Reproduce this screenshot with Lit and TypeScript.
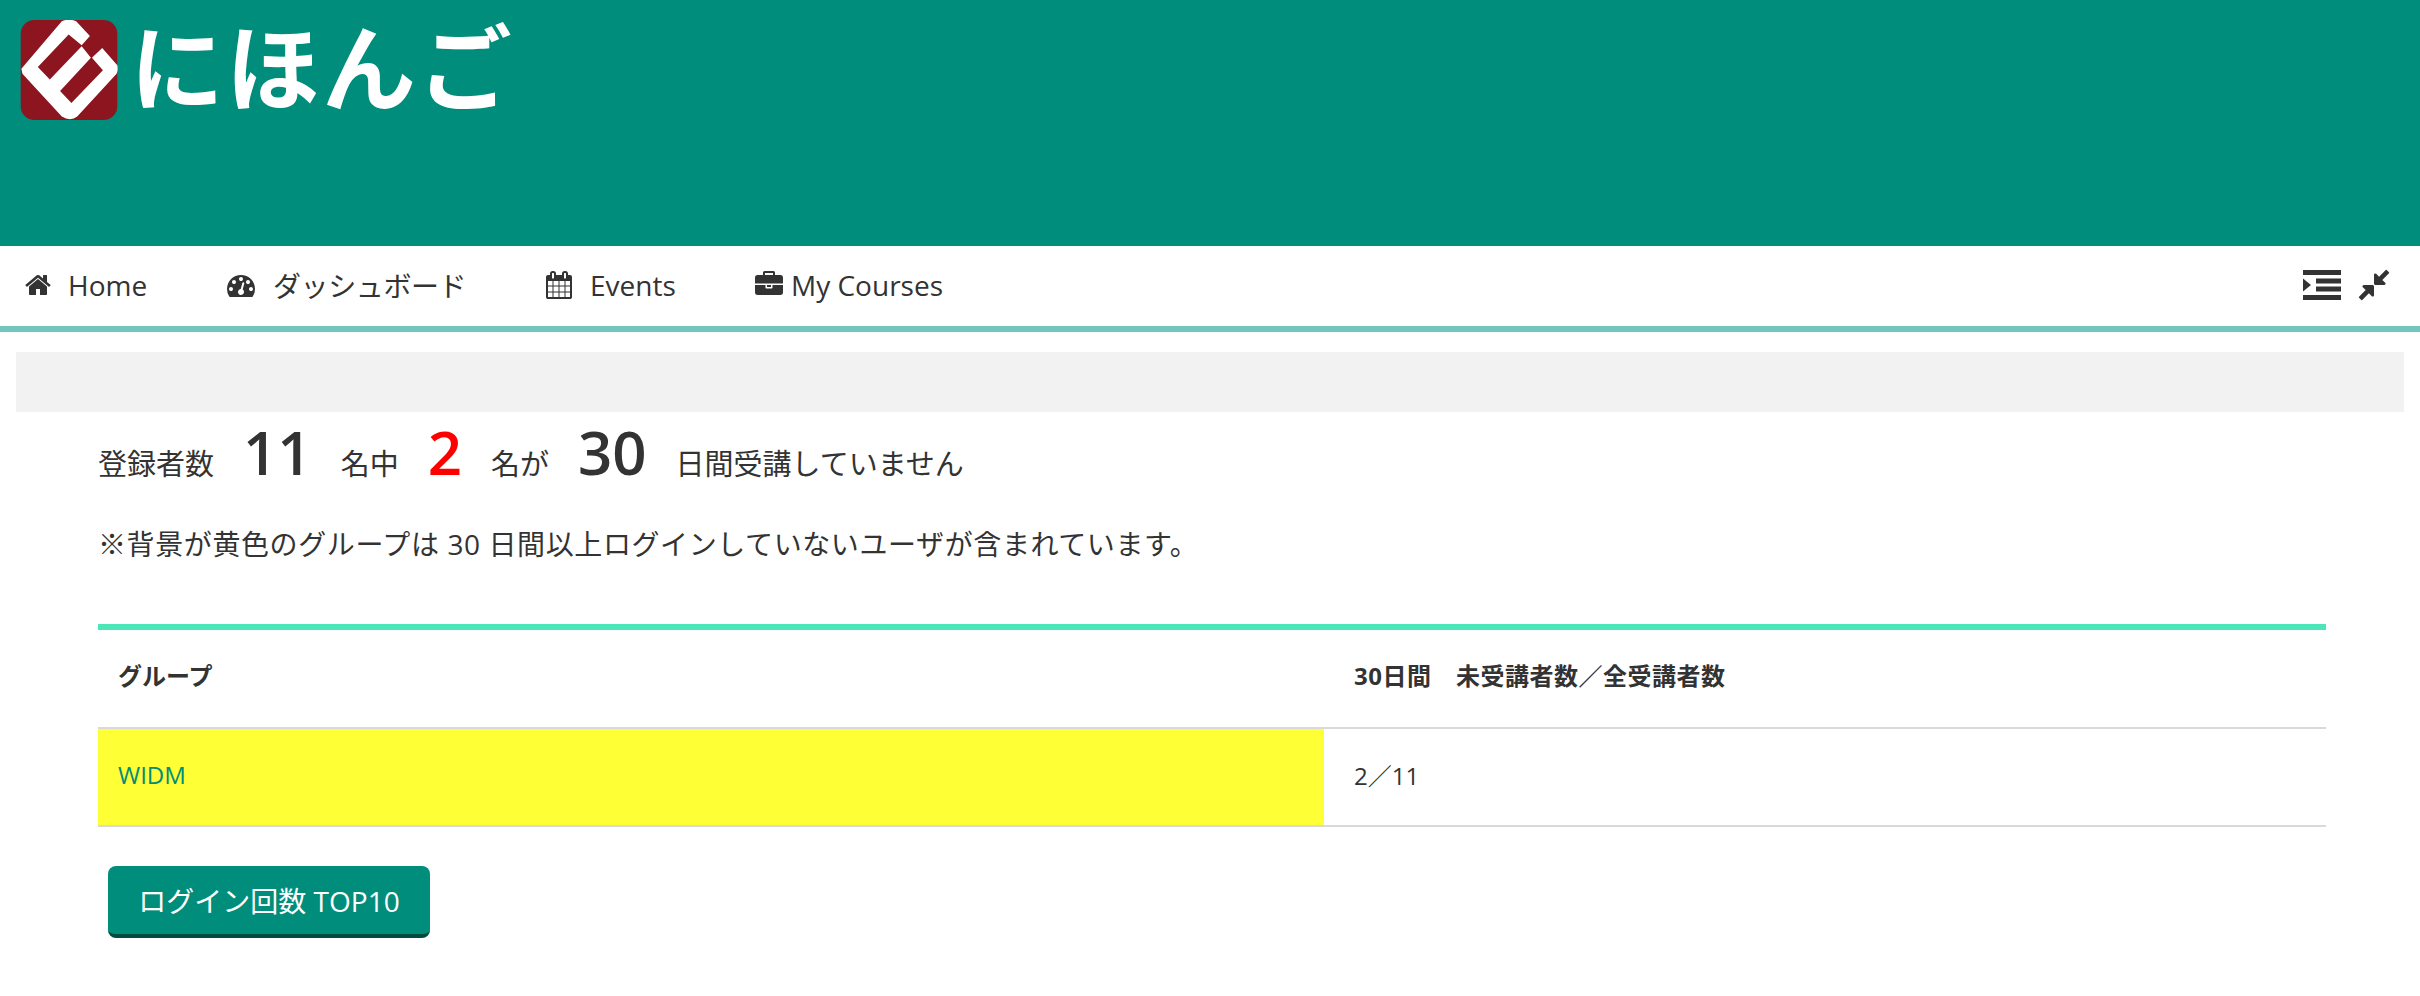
import { LitElement, html, css, svg } from 'lit';
import { customElement } from 'lit/decorators.js';

const icons = {
  home: 'M1472 992v480q0 26-19 45t-45 19h-384v-384h-256v384h-384q-26 0-45-19t-19-45v-480q0-1 .5-3t.5-3l575-474 575 474q1 2 1 6zm223-69l-62 74q-8 9-21 11h-3q-13 0-21-7l-692-577-692 577q-12 8-24 7-13-2-21-11l-62-74q-8-10-7-23.500t11-21.500l719-599q32-26 76-26t76 26l244 204v-195q0-14 9-23t23-9h192q14 0 23 9t9 23v408l219 182q10 8 11 21.500t-7 23.500z',
  gauge: 'M384 1152q0-53-37.500-90.500t-90.500-37.500-90.500 37.500-37.500 90.500 37.500 90.500 90.500 37.500 90.500-37.500 37.500-90.500zm192-448q0-53-37.500-90.500t-90.500-37.500-90.500 37.500-37.500 90.500 37.500 90.500 90.500 37.500 90.500-37.500 37.500-90.500zm428 481l101-382q6-26-7.500-48.500t-38.500-29.500-48 6.500-30 39.500l-101 382q-60 5-107 43.500t-63 98.500q-20 77 20 146t117 89 146-20 89-117q16-60-6-117t-72-91zm660-33q0-53-37.500-90.500t-90.500-37.500-90.500 37.500-37.500 90.500 37.500 90.500 90.500 37.500 90.500-37.500 37.500-90.500zm-640-640q0-53-37.500-90.500t-90.500-37.500-90.500 37.500-37.500 90.500 37.500 90.500 90.500 37.500 90.500-37.500 37.500-90.500zm448 192q0-53-37.500-90.500t-90.500-37.500-90.500 37.500-37.500 90.500 37.500 90.500 90.500 37.500 90.500-37.500 37.500-90.500zm320 448q0 261-141 483-19 29-54 29h-1402q-35 0-54-29-141-221-141-483 0-182 71-348t191-286 286-191 348-71 348 71 286 191 191 286 71 348z',
  calendar: 'M192 1664h288v-288h-288v288zm352 0h320v-288h-320v288zm-352-352h288v-320h-288v320zm352 0h320v-320h-320v320zm-352-384h288v-288h-288v288zm736 736h320v-288h-320v288zm-384-736h320v-288h-320v288zm768 736h288v-288h-288v288zm-384-352h320v-320h-320v320zm-352-864v-288q0-13-9.500-22.500t-22.500-9.500h-64q-13 0-22.500 9.500t-9.500 22.500v288q0 13 9.500 22.500t22.500 9.500h64q13 0 22.500-9.500t9.500-22.500zm736 864h288v-320h-288v320zm-384-384h320v-288h-320v288zm384 0h288v-288h-288v288zm32-480v-288q0-13-9.500-22.500t-22.500-9.500h-64q-13 0-22.500 9.500t-9.500 22.500v288q0 13 9.500 22.500t22.500 9.500h64q13 0 22.500-9.500t9.500-22.500zm384-64v1280q0 52-38 90t-90 38h-1408q-52 0-90-38t-38-90v-1280q0-52 38-90t90-38h128v-96q0-66 47-113t113-47h64q66 0 113 47t47 113v96h384v-96q0-66 47-113t113-47h64q66 0 113 47t47 113v96h128q52 0 90 38t38 90z',
  briefcase: 'M640 256h512v-128h-512v128zm1152 640v480q0 66-47 113t-113 47h-1472q-66 0-113-47t-47-113v-480h672v160q0 26 19 45t45 19h320q26 0 45-19t19-45v-160h672zm-768 0v128h-256v-128h256zm768-480v384h-1792v-384q0-66 47-113t113-47h352v-160q0-40 28-68t68-28h576q40 0 68 28t28 68v160h352q66 0 113 47t47 113z',
  compress: 'M896 960v448q0 26-19 45t-45 19-45-19l-144-144-332 332q-10 10-23 10t-23-10l-114-114q-10-10-10-23t10-23l332-332-144-144q-19-19-19-45t19-45 45-19h448q26 0 45 19t19 45zm755-672q0 13-10 23l-332 332 144 144q19 19 19 45t-19 45-45 19h-448q-26 0-45-19t-19-45v-448q0-26 19-45t45-19 45 19l144 144 332-332q10-10 23-10t23 10l114 114q10 10 10 23z',
};

const icon = (d: string) => html`<svg class="ico" viewBox="0 0 1792 1792"><path d=${d}></path></svg>`;

@customElement('app-root')
export class AppRoot extends LitElement {
  static styles = css`
    :host {
      display: block;
      font-family: "Open Sans", "Noto Sans CJK JP", sans-serif;
      color: #333;
      background: #fff;
      min-height: 996px;
    }
    .header {
      height: 246px;
      background: #008d7b;
      box-sizing: border-box;
      padding: 15px 0 0 20px;
      display: flex;
      align-items: flex-start;
      gap: 12px;
    }
    .mark { width: 98px; height: 100px; flex: none; margin-top: 5px; }
    .brand {
      font-family: "Noto Sans CJK JP", sans-serif;
      font-weight: 700;
      font-size: 94px;
      line-height: 96px;
      color: #fff;
      letter-spacing: 2px;
    }
    .nav {
      height: 78px;
      border-bottom: 6px solid #73c6bc;
      display: flex;
      align-items: center;
      padding: 0 28px 2px 24px;
      font-size: 28px;
      white-space: nowrap;
    }
    .nav a { display: flex; align-items: center; }
    .ico { width: 28px; height: 28px; fill: #333; flex: none; }
    .home { gap: 16px; width: 203px; }
    .dash { gap: 18px; width: 318px; letter-spacing: -0.4px; }
    .events { gap: 17px; width: 210px; }
    .courses { gap: 8px; }
    .spacer { flex: 1; }
    .indent { width: 38px; height: 30px; fill: #333; margin-right: 15px; }
    .compress { width: 36px; height: 36px; }
    .crumb {
      height: 60px;
      background: #f2f2f2;
      margin: 20px 16px 0;
    }
    .main { padding: 0 94px 0 98px; }
    .stats {
      display: flex;
      align-items: baseline;
      gap: 29px;
      font-size: 29px;
      height: 60px;
      line-height: 60px;
      margin-top: 10px;
    }
    .num { font-size: 60px; font-weight: 600; }
    .red { color: #f00; }
    .note {
      font-size: 28px;
      letter-spacing: 0.6px;
      line-height: 40px;
      margin: 42px 0 0;
    }
    table {
      width: 100%;
      margin-top: 60px;
      border-collapse: collapse;
      table-layout: fixed;
      font-size: 24px;
      border-top: 6px solid #4de6b9;
    }
    th, td {
      text-align: left;
      padding: 0 20px;
      border-bottom: 2px solid #d9d9d9;
    }
    th { height: 89px; padding-bottom: 8px; font-weight: 700; }
    td { height: 90px; padding-bottom: 6px; }
    .first { width: 1226px; box-sizing: border-box; }
    .second { padding-left: 30px; }
    th.second { letter-spacing: 0.5px; }
    .flag { background: #ffff36; }
    .flag a { color: #008d7b; }
    .btn {
      display: block;
      margin: 39px 0 0 10px;
      width: 322px;
      height: 72px;
      box-sizing: border-box;
      border: 0;
      border-bottom: 4px solid #004d40;
      border-radius: 8px;
      background: #008d7b;
      color: #fff;
      font: inherit;
      font-size: 28px;
      padding: 0;
    }
  `;

  render() {
    return html`
      <div class="header">
        <svg class="mark" viewBox="60 58 282 292">
          <rect x="60" y="58" width="282" height="292" rx="40" fill="#8c1520"></rect>
          ${svg`<path fill="#fff" d="M62 200L180 62Q200 52 222 62L262 105L238 132L200 100L110 195L145 232L238 135L265 168L175 265L208 300L300 205L268 168L298 140L342 190Q345 205 340 215L225 340Q205 355 180 340L65 215Z"></path>`}
        </svg>
        <div class="brand">にほんご</div>
      </div>
      <nav class="nav">
        <a class="home">${icon(icons.home)}Home</a>
        <a class="dash">${icon(icons.gauge)}ダッシュボード</a>
        <a class="events">${icon(icons.calendar)}Events</a>
        <a class="courses">${icon(icons.briefcase)}My Courses</a>
        <div class="spacer"></div>
        <svg class="indent" viewBox="0 0 38 30">
          <rect width="38" height="5"></rect>
          <rect x="13" y="8.500" width="25" height="5"></rect>
          <rect x="13" y="16.500" width="25" height="5"></rect>
          <rect y="25" width="38" height="5"></rect>
          <path d="M0 8.500L8 15L0 21.500Z"></path>
        </svg>
        <svg class="ico compress" viewBox="0 0 1792 1792"><path d=${icons.compress}></path></svg>
      </nav>
      <div class="crumb"></div>
      <div class="main">
        <div class="stats">
          <span>登録者数</span>
          <span class="num">11</span>
          <span>名中</span>
          <span class="num red">2</span>
          <span>名が</span>
          <span class="num">30</span>
          <span>日間受講していません</span>
        </div>
        <p class="note">※背景が黄色のグループは 30 日間以上ログインしていないユーザが含まれています。</p>
        <table>
          <thead>
            <tr>
              <th class="first">グループ</th>
              <th class="second">30日間　未受講者数／全受講者数</th>
            </tr>
          </thead>
          <tbody>
            <tr>
              <td class="first flag"><a>WIDM</a></td>
              <td class="second">2／11</td>
            </tr>
          </tbody>
        </table>
        <button class="btn">ログイン回数 TOP10</button>
      </div>
    `;
  }
}
